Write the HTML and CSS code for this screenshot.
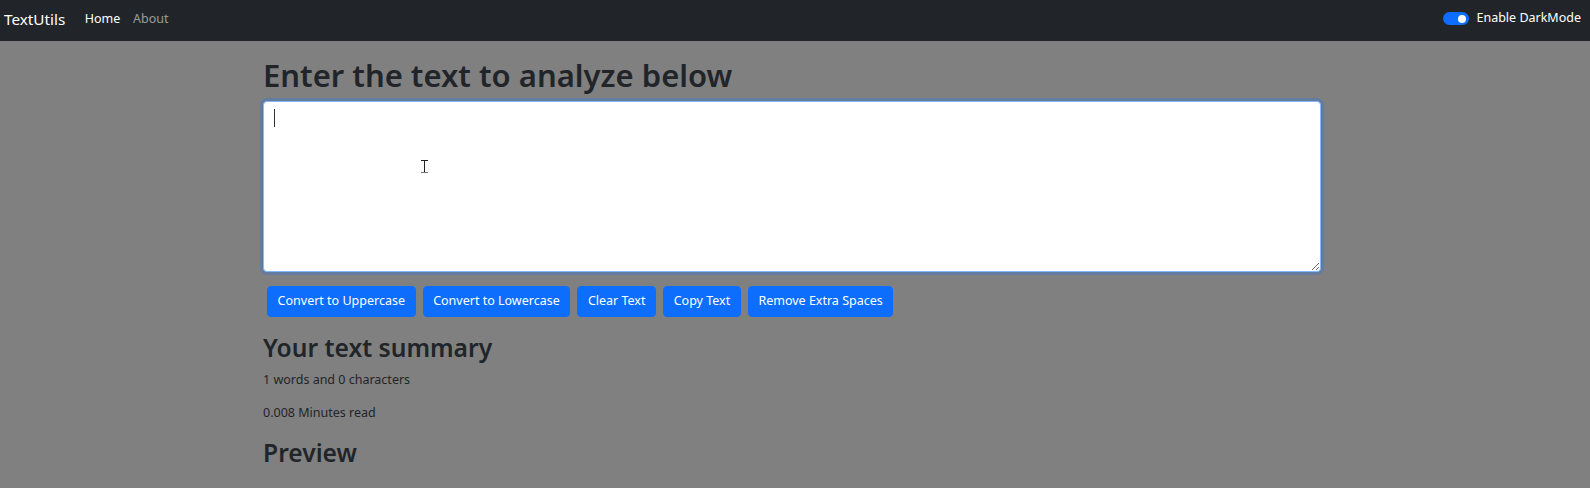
FILE: index.html
```html
<!DOCTYPE html>
<html lang="en">
<head>
<meta charset="utf-8">
<title>TextUtils</title>
<link rel="stylesheet" href="styles.css">
</head>
<body>
<nav class="navbar">
  <a class="brand" href="#">TextUtils</a>
  <ul class="nav-links">
    <li><a class="nav-link active" href="#">Home</a></li>
    <li><a class="nav-link" href="#">About</a></li>
  </ul>
  <div class="switch-wrap">
    <span class="switch"><span class="knob"></span></span>
    <label class="switch-label">Enable DarkMode</label>
  </div>
</nav>
<main class="container">
  <h1 class="title">Enter the text to analyze below</h1>
  <div class="editor">
    <textarea class="textbox" rows="8"></textarea>
    <span class="caret"></span>
    <span class="ibeam"><span class="ib-top"></span><span class="ib-stem"></span><span class="ib-bot"></span></span>
  </div>
  <div class="actions">
    <button class="btn">Convert to Uppercase</button>
    <button class="btn">Convert to Lowercase</button>
    <button class="btn">Clear Text</button>
    <button class="btn">Copy Text</button>
    <button class="btn">Remove Extra Spaces</button>
  </div>
  <section class="summary">
    <h2 class="subtitle">Your text summary</h2>
    <p class="stat">1 words and 0 characters</p>
    <p class="stat">0.008 Minutes read</p>
    <h2 class="subtitle preview">Preview</h2>
  </section>
</main>
</body>
</html>
```
FILE: styles.css
```css
* { box-sizing: border-box; }
html, body { margin: 0; padding: 0; }
body {
  background: #808080;
  color: #212529;
  font-family: "Noto Sans", "Open Sans", sans-serif;
  font-size: 12.5px;
  line-height: 1.5;
  height: 488px;
  overflow: hidden;
}
.navbar {
  height: 41px;
  background: #212529;
  display: flex;
  align-items: center;
  padding: 0 9px 3px 4px;
}
.brand {
  color: #fff;
  font-size: 15.3px;
  text-decoration: none;
  margin-right: 13px;
}
.nav-links {
  list-style: none;
  display: flex;
  margin: 0;
  padding: 0;
  flex: 1;
}
.nav-link {
  display: block;
  padding: 0 6.4px;
  color: rgba(255,255,255,.55);
  text-decoration: none;
  font-size: 12.5px;
}
.nav-link.active { color: #fff; }
.switch-wrap {
  display: flex;
  align-items: center;
  gap: 7px;
  padding-bottom: 1px;
}
.switch {
  width: 26px;
  height: 13px;
  border-radius: 7px;
  background: #0d6efd;
  display: flex;
  align-items: center;
  justify-content: flex-end;
  padding-right: 3px;
}
.knob {
  width: 8px;
  height: 8px;
  border-radius: 50%;
  background: #fff;
}
.switch-label {
  color: #fff;
  font-size: 12.5px;
}
.container {
  width: 1058px;
  margin-left: 263px;
}
.title {
  font-size: 31px;
  font-weight: 600;
  line-height: 1.2;
  margin: 16px 0 7px;
}
.editor {
  position: relative;
}
.textbox {
  display: block;
  width: 100%;
  height: 171px;
  border: 1px solid #86b7fe;
  border-radius: 4px;
  box-shadow: 0 0 0 3px rgba(13,110,253,.25);
  background: #fff;
  outline: none;
  resize: vertical;
  font: inherit;
  padding: 5px 10px;
}
.caret {
  position: absolute;
  left: 11px;
  top: 8px;
  width: 1px;
  height: 18px;
  background: #333;
}
.ibeam {
  position: absolute;
  left: 158px;
  top: 59px;
  width: 7px;
  height: 13px;
}
.ib-top, .ib-bot {
  position: absolute;
  left: 0;
  width: 7px;
  height: 1px;
  background: #222;
}
.ib-top { top: 0; }
.ib-bot { bottom: 0; background: #777; }
.ib-stem {
  position: absolute;
  left: 3px;
  top: 0;
  width: 1px;
  height: 13px;
  background: #222;
}
.actions {
  display: flex;
  gap: 7px;
  margin: 14px 0 0 4px;
}
.btn {
  font: inherit;
  font-size: 12.5px;
  line-height: 1.5;
  color: #fff;
  background: #0d6efd;
  border: 1px solid #0d6efd;
  border-radius: 4px;
  padding: 4.8px 9.6px;
  height: 31px;
}
.summary { margin-top: 16px; }
.subtitle {
  font-size: 24.6px;
  font-weight: 600;
  line-height: 1.2;
  margin: 0 0 8px;
}
.stat { margin: 0 0 15px; }
.preview { margin-top: 15px; }
```
